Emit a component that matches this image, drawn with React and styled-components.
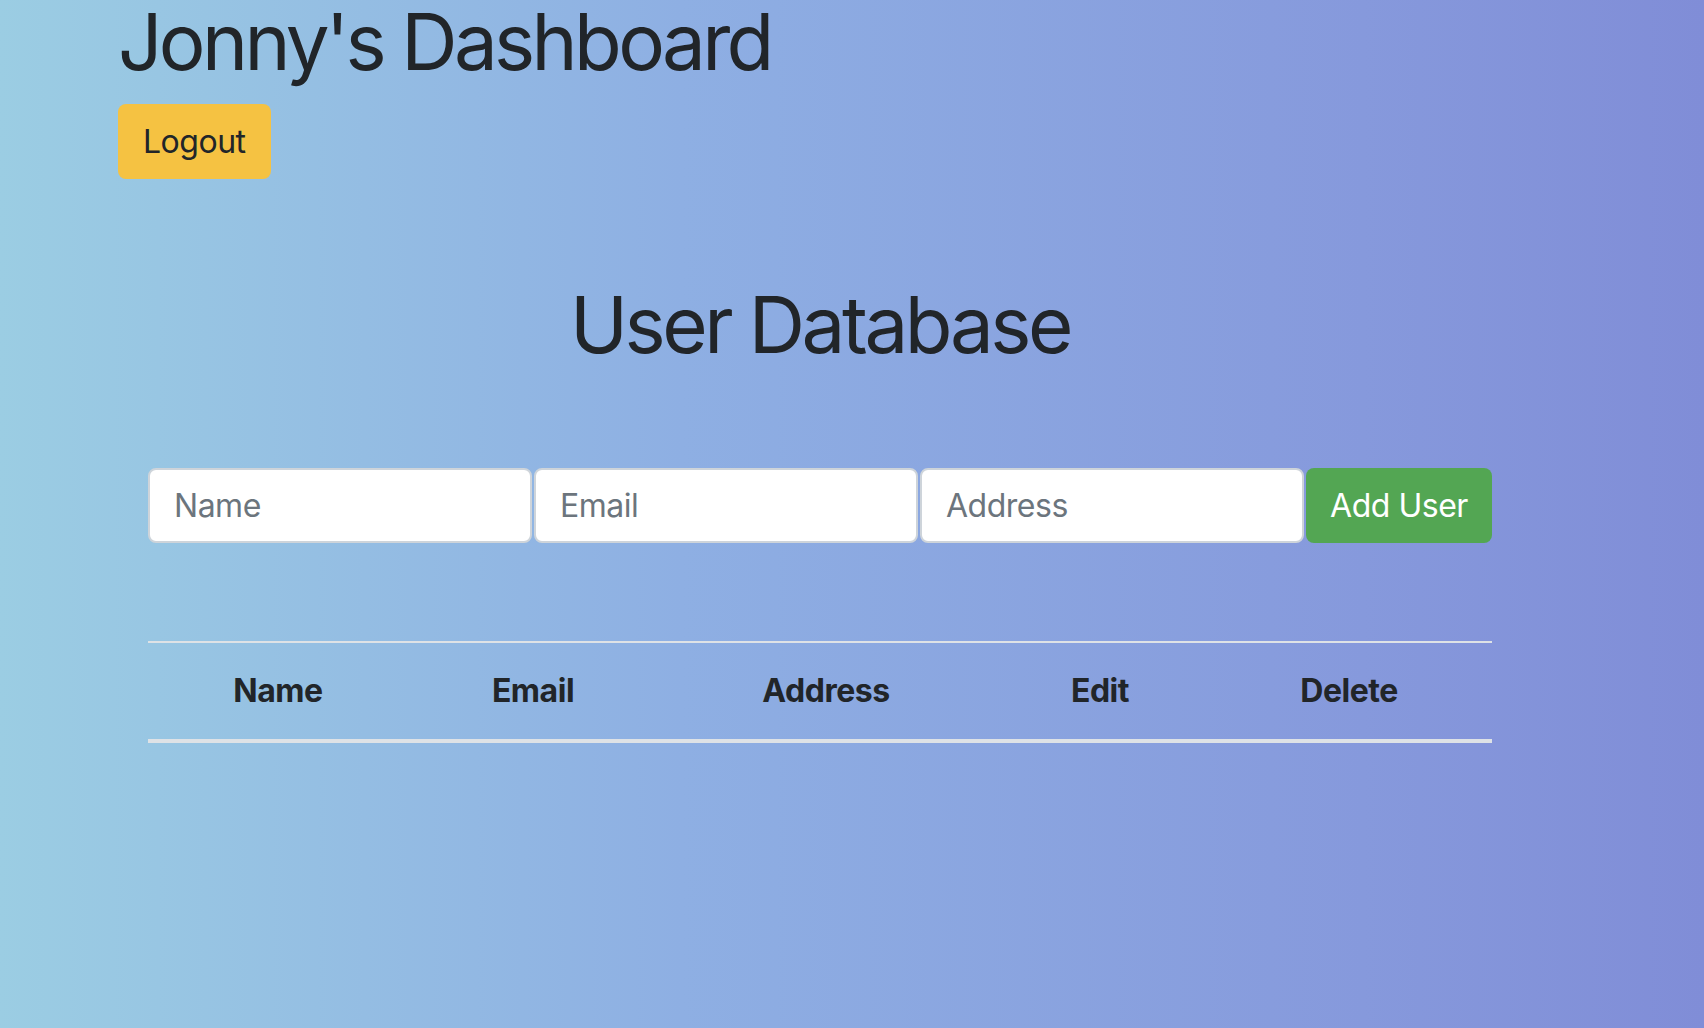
import React from "react";
import styled, { createGlobalStyle } from "styled-components";

const GlobalStyle = createGlobalStyle`
  html, body {
    margin: 0;
    padding: 0;
  }
  body {
    font-family: Inter, "Noto Sans", "Liberation Sans", sans-serif;
    color: #212529;
    background: linear-gradient(to right, #9bcde3 0%, #8eafe3 40%, #8699dc 80%, #808dd7 100%);
    min-height: 100vh;
  }
`;

const columns = [
  { label: "Name", width: 260 },
  { label: "Email", width: 250 },
  { label: "Address", width: 336 },
  { label: "Edit", width: 212 },
  { label: "Delete", width: 286 },
];

const App = () => {
  return (
    <>
      <GlobalStyle />
      <Page>
        <Header>
          <Title>Jonny's Dashboard</Title>
          <LogoutButton type="button">Logout</LogoutButton>
        </Header>
        <Container>
          <SectionTitle>User Database</SectionTitle>
          <Form onSubmit={(e) => e.preventDefault()}>
            <Input type="text" placeholder="Name" />
            <Input type="email" placeholder="Email" />
            <Input type="text" placeholder="Address" />
            <AddButton type="submit">Add User</AddButton>
          </Form>
          <Table>
            <thead>
              <tr>
                {columns.map((c) => (
                  <Th key={c.label} $width={c.width}>
                    {c.label}
                  </Th>
                ))}
              </tr>
            </thead>
            <tbody></tbody>
          </Table>
        </Container>
      </Page>
    </>
  );
};

const Page = styled.div`
  min-height: 100vh;
  width: 100%;
`;

const Header = styled.header`
  padding-left: 118px;
  display: flex;
  flex-direction: column;
  align-items: flex-start;
`;

const Title = styled.h1`
  margin: 0 0 20px;
  font-size: 78px;
  font-weight: 400;
  line-height: 84px;
  letter-spacing: -0.047em;
  white-space: nowrap;
`;

const LogoutButton = styled.button`
  height: 75px;
  padding: 0 25px;
  font-family: inherit;
  font-size: 32px;
  color: #212529;
  background-color: #f5c242;
  border: none;
  border-radius: 8px;
  letter-spacing: -0.015em;
  cursor: pointer;
`;

const Container = styled.main`
  margin-left: 148px;
  width: 1344px;
  display: flex;
  flex-direction: column;
`;

const SectionTitle = styled.h1`
  margin: 98px 0 95px;
  text-align: center;
  font-size: 78px;
  font-weight: 400;
  line-height: 96px;
  letter-spacing: -0.044em;
`;

const Form = styled.form`
  display: flex;
  gap: 2px;
  height: 75px;
  margin-bottom: 98px;
`;

const Input = styled.input`
  flex: 1;
  min-width: 0;
  box-sizing: border-box;
  height: 75px;
  padding: 0 24px;
  font-family: inherit;
  font-size: 32px;
  letter-spacing: -0.015em;
  color: #495057;
  background: #fff;
  border: 2px solid #ced4da;
  border-radius: 8px;
  outline: none;

  &::placeholder {
    color: #6c757d;
  }
`;

const AddButton = styled.button`
  width: 186px;
  flex: none;
  height: 75px;
  padding: 0;
  font-family: inherit;
  font-size: 32px;
  letter-spacing: -0.015em;
  color: #fff;
  background-color: #53a653;
  border: none;
  border-radius: 8px;
  cursor: pointer;
`;

const Table = styled.table`
  width: 100%;
  border-collapse: collapse;
  table-layout: fixed;
`;

const Th = styled.th`
  box-sizing: border-box;
  width: ${(p) => p.$width}px;
  padding: 24px 0;
  font-size: 32px;
  font-weight: 700;
  line-height: 48px;
  letter-spacing: -0.015em;
  text-align: center;
  border-top: 2px solid #dee2e6;
  border-bottom: 4px solid #dee2e6;
`;

export default App;
